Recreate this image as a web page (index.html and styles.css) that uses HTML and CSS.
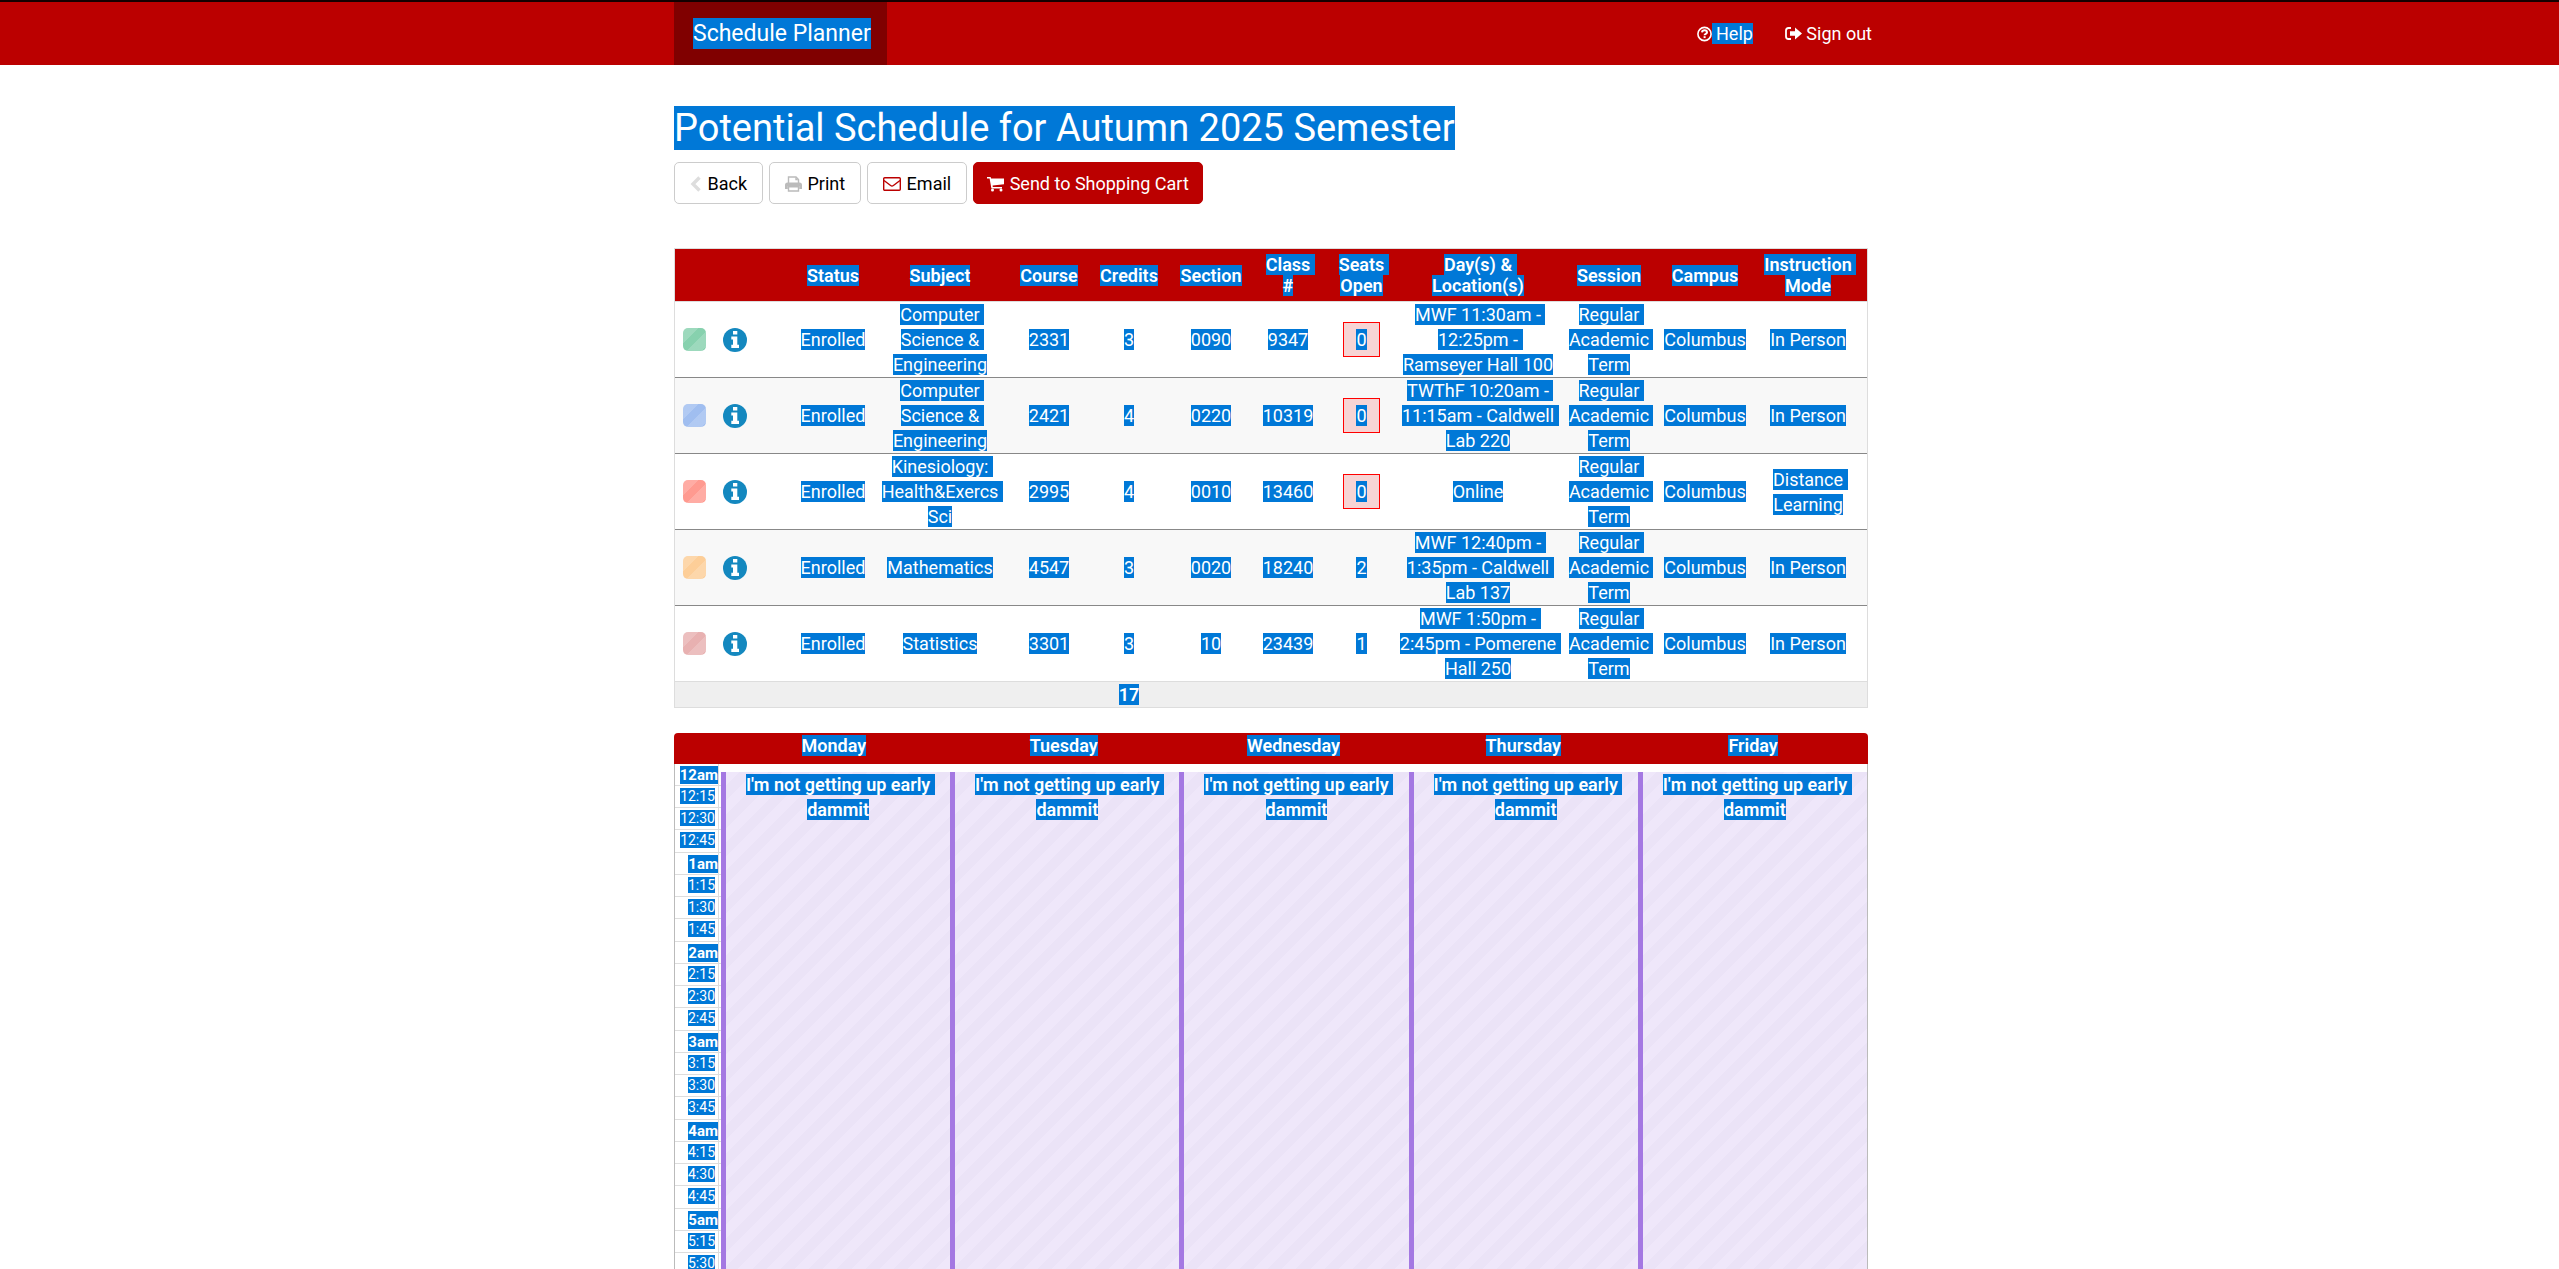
FILE: index.html
```html
<!DOCTYPE html>
<html lang="en">
<head>
<meta charset="utf-8">
<title>Schedule Planner</title>
<link rel="stylesheet" href="styles.css">
</head>
<body>
<header class="topbar">
  <div class="container topbar-inner">
    <a class="brand" href="#"><mark>Schedule Planner</mark></a>
    <nav class="topnav">
      <a href="#"><svg class="icon" width="15" height="16" viewBox="0 0 15 16"><circle cx="7.500" cy="8" r="6.600" fill="none" stroke="currentColor" stroke-width="1.600"/><path d="M5 6.300Q5.300 4.300 7.600 4.300T10 6.300Q10 7.300 8.800 7.900T7.600 9.300" fill="none" stroke="currentColor" stroke-width="2"/><path d="M6.600 10.200h2v1.900h-2z" fill="currentColor"/></svg><mark> Help</mark></a>
      <a href="#"><svg class="icon" width="17" height="16" viewBox="0 0 17 16"><path d="M6 2H3.500Q1 2 1 4.500v6Q1 13 3.500 13H6" fill="none" stroke="currentColor" stroke-width="1.800"/><path d="M5 5.200h5V1.500L17 7.500l-7 6V9.800H5z" fill="currentColor"/></svg> Sign out</a>
    </nav>
  </div>
</header>
<main class="container main">
  <h1><mark>Potential Schedule for Autumn 2025 Semester</mark></h1>
  <div class="actions">
    <button class="btn" type="button"><svg class="icon back" width="12" height="16" viewBox="0 0 12 16"><path d="M9.500 1.500L3 8l6.500 6.500" fill="none" stroke="currentColor" stroke-width="3.400"/></svg> Back</button>
    <button class="btn" type="button"><svg class="icon print" width="17" height="16" viewBox="0 0 17 16"><path d="M3.500 7V1h7.500l2.500 2.500V7M3.500 10.800h10V15h-10z" fill="none" stroke="currentColor" stroke-width="1.400"/><path d="M10.300 1v3.300h3.200M0 9q0-2.500 2.500-2.500h12Q17 6.500 17 9v4h-2.800v-2.900H2.800V13H0z" fill="currentColor"/></svg> Print</button>
    <button class="btn" type="button"><svg class="icon email" width="18" height="16" viewBox="0 0 18 16"><rect x=".7" y="1.700" width="16.600" height="12.600" rx="1" fill="none" stroke="currentColor" stroke-width="1.400"/><path d="M1 4.500l6.600 5q1.400 1 2.800 0l6.600-5" fill="none" stroke="currentColor" stroke-width="1.400"/></svg> Email</button>
    <button class="btn primary" type="button"><svg class="icon" width="17" height="16" viewBox="0 0 17 16"><path d="M0 1h3.600l.5 1.600H17v5.600L5.600 9.600l.2 1.400H15v1.400H4.400L2.600 2.400H0z" fill="currentColor"/><circle cx="5.500" cy="14" r="1.500" fill="currentColor"/><circle cx="14" cy="14" r="1.500" fill="currentColor"/></svg> Send to Shopping Cart</button>
  </div>

  <svg class="defs" width="0" height="0"><symbol id="info" viewBox="0 0 24 24"><circle cx="12" cy="12" r="12" fill="#1488bf"/><path d="M10 3h4.300v3.600H10zM8.300 8.400h6v8.400H16V20H8.300v-3.200H10v-5.200H8.300z" fill="#fff"/></symbol></svg>

  <table class="courses">
    <colgroup><col class="c-swatch"><col class="c-info"><col class="c-status"><col class="c-subject"><col class="c-course"><col class="c-credits"><col class="c-section"><col class="c-class"><col class="c-seats"><col class="c-days"><col class="c-session"><col class="c-campus"><col></colgroup>
    <thead>
      <tr><th></th><th></th><th><mark>Status</mark></th><th><mark>Subject</mark></th><th><mark>Course</mark></th><th><mark>Credits</mark></th><th><mark>Section</mark></th><th class="tight"><mark>Class #</mark></th><th class="tight"><mark>Seats Open</mark></th><th class="tight"><mark>Day(s) &amp; Location(s)</mark></th><th><mark>Session</mark></th><th><mark>Campus</mark></th><th><mark>Instruction Mode</mark></th></tr>
    </thead>
    <tbody>
      <tr><td class="left"><span class="swatch green"></span></td><td class="left"><svg class="info" width="24" height="24"><use href="#info"/></svg></td><td><mark>Enrolled</mark></td><td class="tight"><mark>Computer Science &amp; Engineering</mark></td><td><mark>2331</mark></td><td><mark>3</mark></td><td><mark>0090</mark></td><td><mark>9347</mark></td><td><span class="full"><mark>0</mark></span></td><td><mark>MWF 11:30am - 12:25pm - Ramseyer Hall 100</mark></td><td><mark>Regular Academic Term</mark></td><td><mark>Columbus</mark></td><td><mark>In Person</mark></td></tr>
      <tr><td class="left"><span class="swatch blue"></span></td><td class="left"><svg class="info" width="24" height="24"><use href="#info"/></svg></td><td><mark>Enrolled</mark></td><td class="tight"><mark>Computer Science &amp; Engineering</mark></td><td><mark>2421</mark></td><td><mark>4</mark></td><td><mark>0220</mark></td><td><mark>10319</mark></td><td><span class="full"><mark>0</mark></span></td><td><mark>TWThF 10:20am - 11:15am - Caldwell Lab 220</mark></td><td><mark>Regular Academic Term</mark></td><td><mark>Columbus</mark></td><td><mark>In Person</mark></td></tr>
      <tr><td class="left"><span class="swatch red"></span></td><td class="left"><svg class="info" width="24" height="24"><use href="#info"/></svg></td><td><mark>Enrolled</mark></td><td class="tight"><mark>Kinesiology: Health&amp;Exercs Sci</mark></td><td><mark>2995</mark></td><td><mark>4</mark></td><td><mark>0010</mark></td><td><mark>13460</mark></td><td><span class="full"><mark>0</mark></span></td><td><mark>Online</mark></td><td><mark>Regular Academic Term</mark></td><td><mark>Columbus</mark></td><td><mark>Distance Learning</mark></td></tr>
      <tr><td class="left"><span class="swatch orange"></span></td><td class="left"><svg class="info" width="24" height="24"><use href="#info"/></svg></td><td><mark>Enrolled</mark></td><td class="tight"><mark>Mathematics</mark></td><td><mark>4547</mark></td><td><mark>3</mark></td><td><mark>0020</mark></td><td><mark>18240</mark></td><td><mark>2</mark></td><td><mark>MWF 12:40pm - 1:35pm - Caldwell Lab 137</mark></td><td><mark>Regular Academic Term</mark></td><td><mark>Columbus</mark></td><td><mark>In Person</mark></td></tr>
      <tr><td class="left"><span class="swatch pink"></span></td><td class="left"><svg class="info" width="24" height="24"><use href="#info"/></svg></td><td><mark>Enrolled</mark></td><td class="tight"><mark>Statistics</mark></td><td><mark>3301</mark></td><td><mark>3</mark></td><td><mark>10</mark></td><td><mark>23439</mark></td><td><mark>1</mark></td><td><mark>MWF 1:50pm - 2:45pm - Pomerene Hall 250</mark></td><td><mark>Regular Academic Term</mark></td><td><mark>Columbus</mark></td><td><mark>In Person</mark></td></tr>
    </tbody>
    <tfoot>
      <tr><td colspan="5"></td><td><mark>17</mark></td><td colspan="7"></td></tr>
    </tfoot>
  </table>

  <section class="calendar">
    <div class="days"><span></span><span><mark>Monday</mark></span><span><mark>Tuesday</mark></span><span><mark>Wednesday</mark></span><span><mark>Thursday</mark></span><span><mark>Friday</mark></span></div>
    <div class="grid">
      <div class="axis">
        <div class="hour"><span><b><mark>12am</mark></b></span><span><mark>12:15</mark></span><span><mark>12:30</mark></span><span><mark>12:45</mark></span></div>
        <div class="hour"><span><b><mark>1am</mark></b></span><span><mark>1:15</mark></span><span><mark>1:30</mark></span><span><mark>1:45</mark></span></div>
        <div class="hour"><span><b><mark>2am</mark></b></span><span><mark>2:15</mark></span><span><mark>2:30</mark></span><span><mark>2:45</mark></span></div>
        <div class="hour"><span><b><mark>3am</mark></b></span><span><mark>3:15</mark></span><span><mark>3:30</mark></span><span><mark>3:45</mark></span></div>
        <div class="hour"><span><b><mark>4am</mark></b></span><span><mark>4:15</mark></span><span><mark>4:30</mark></span><span><mark>4:45</mark></span></div>
        <div class="hour"><span><b><mark>5am</mark></b></span><span><mark>5:15</mark></span><span><mark>5:30</mark></span></div>
      </div>
      <div class="events">
        <div class="event"><mark>I'm not getting up early dammit</mark></div>
        <div class="event"><mark>I'm not getting up early dammit</mark></div>
        <div class="event"><mark>I'm not getting up early dammit</mark></div>
        <div class="event"><mark>I'm not getting up early dammit</mark></div>
        <div class="event"><mark>I'm not getting up early dammit</mark></div>
      </div>
    </div>
  </section>
</main>
</body>
</html>
```
FILE: styles.css
```css
* { box-sizing: border-box; }

body {
  margin: 0;
  height: 100vh;
  overflow: hidden;
  display: flex;
  flex-direction: column;
  font: 18px/25px Roboto, sans-serif;
  color: #000;
  background: #fff;
}

mark {
  background: #0078d7;
  color: #fff;
  white-space: pre-wrap;
}

a { color: inherit; text-decoration: none; }
.defs { position: absolute; }

.container {
  width: 100%;
  max-width: 1211px;
  margin: 0 auto;
  padding-right: 17px;
}

.topbar {
  flex: none;
  height: 65px;
  border-top: 2px solid #140000;
  background: #b00;
  color: #fff;
}

.topbar-inner {
  display: flex;
  justify-content: space-between;
  height: 100%;
}

.brand {
  display: flex;
  padding: 16px 16px 16px 19px;
  background: #800000;
  font-size: 23px;
  line-height: 31px;
}

.topnav {
  display: flex;
  gap: 32px;
  padding-top: 19px;
  margin-right: -4px;
}

.icon { vertical-align: -2px; }

.main {
  flex: 1;
  min-height: 0;
  display: flex;
  flex-direction: column;
}

h1 {
  margin: 41px 0 11px;
  font-size: 38px;
  line-height: 45px;
  font-weight: 400;
}

.actions {
  display: flex;
  gap: 6px;
  margin-bottom: 44px;
}

.btn {
  height: 42px;
  padding: 0 15px;
  border: 1px solid #ccc;
  border-radius: 5px;
  background: #fff;
  color: #000;
  font: inherit;
}

.btn .icon { margin-right: 1px; }

.btn.primary {
  padding: 0 13px;
  background: #b00;
  border-color: #b00;
  color: #fff;
}

.back { color: #ddd; }
.print { color: #bbb; }
.email { color: #b00; }

.courses {
  flex: none;
  width: 100%;
  table-layout: fixed;
  border: 1px solid #ddd;
  border-collapse: separate;
  border-spacing: 0;
  text-align: center;
}

.c-swatch { width: 40px; }
.c-info { width: 81px; }
.c-status { width: 74px; }
.c-subject { width: 140px; }
.c-course { width: 78px; }
.c-credits, .c-section { width: 82px; }
.c-class { width: 72px; }
.c-seats { width: 75px; }
.c-days { width: 158px; }
.c-session { width: 104px; }
.c-campus { width: 88px; }

th {
  height: 53px;
  padding: 0;
  border-bottom: 1px solid #ddd;
  background: #b00;
  font-weight: 600;
  line-height: 21px;
}

td {
  height: 76px;
  padding: 0;
  border-bottom: 1px solid #888;
}

.tight { padding: 0 8px; }
.left { padding-left: 8px; text-align: left; }
tbody tr:nth-child(even) { background: #f8f8f8; }
tbody tr:last-child td { border-color: #ddd; }

tfoot td {
  height: 25px;
  border: 0;
  background: #efefef;
  font-weight: 600;
}

.swatch {
  display: block;
  width: 23px;
  height: 23px;
  border-radius: 5px;
  background-image: linear-gradient(135deg, rgba(255, 255, 255, .18) 0 11px, transparent 11px 19px, rgba(255, 255, 255, .18) 19px 29px, transparent 29px);
}

.green { background-color: #87d1ae; }
.blue { background-color: #a0bef0; }
.red { background-color: #ff9a90; }
.orange { background-color: #fdce98; }
.pink { background-color: #e8b1b1; }

.info { display: block; }

.full {
  display: inline-block;
  width: 37px;
  padding: 4px 0;
  border: 1px solid #f00;
  background: #f7d4d4;
}

.calendar {
  flex: 1;
  min-height: 0;
  display: flex;
  flex-direction: column;
  margin-top: 25px;
}

.days {
  display: grid;
  grid-template-columns: 45px repeat(5, 1fr);
  height: 31px;
  border-radius: 4px 4px 0 0;
  background: #b00;
  font-weight: 600;
  text-align: center;
}

.grid {
  flex: 1;
  min-height: 0;
  display: flex;
  overflow: hidden;
  border: solid #bbb;
  border-width: 0 1px;
}

.axis {
  width: 46px;
  font-size: 14px;
  line-height: 21px;
  text-align: right;
}

.hour {
  display: grid;
  grid-template-rows: 22px 22px 22px 23px;
  background: linear-gradient(#ddd, #ddd) 43px 0 / 1px 100% no-repeat;
}

.hour span { padding-right: 6px; border-bottom: 1px solid #ddd; }
.hour span:first-child { padding-right: 3px; line-height: 23px; }
.hour b { font-size: 15px; }

.events {
  flex: 1;
  display: grid;
  grid-template-columns: repeat(5, 1fr);
  padding-top: 8px;
}

.event {
  border-left: 5px solid #a478e2;
  background: #ebe3f7 repeating-linear-gradient(-45deg, #efe7fa 0 10px, #ebe3f7 10px 20px);
  font-weight: 600;
  text-align: center;
}
```
